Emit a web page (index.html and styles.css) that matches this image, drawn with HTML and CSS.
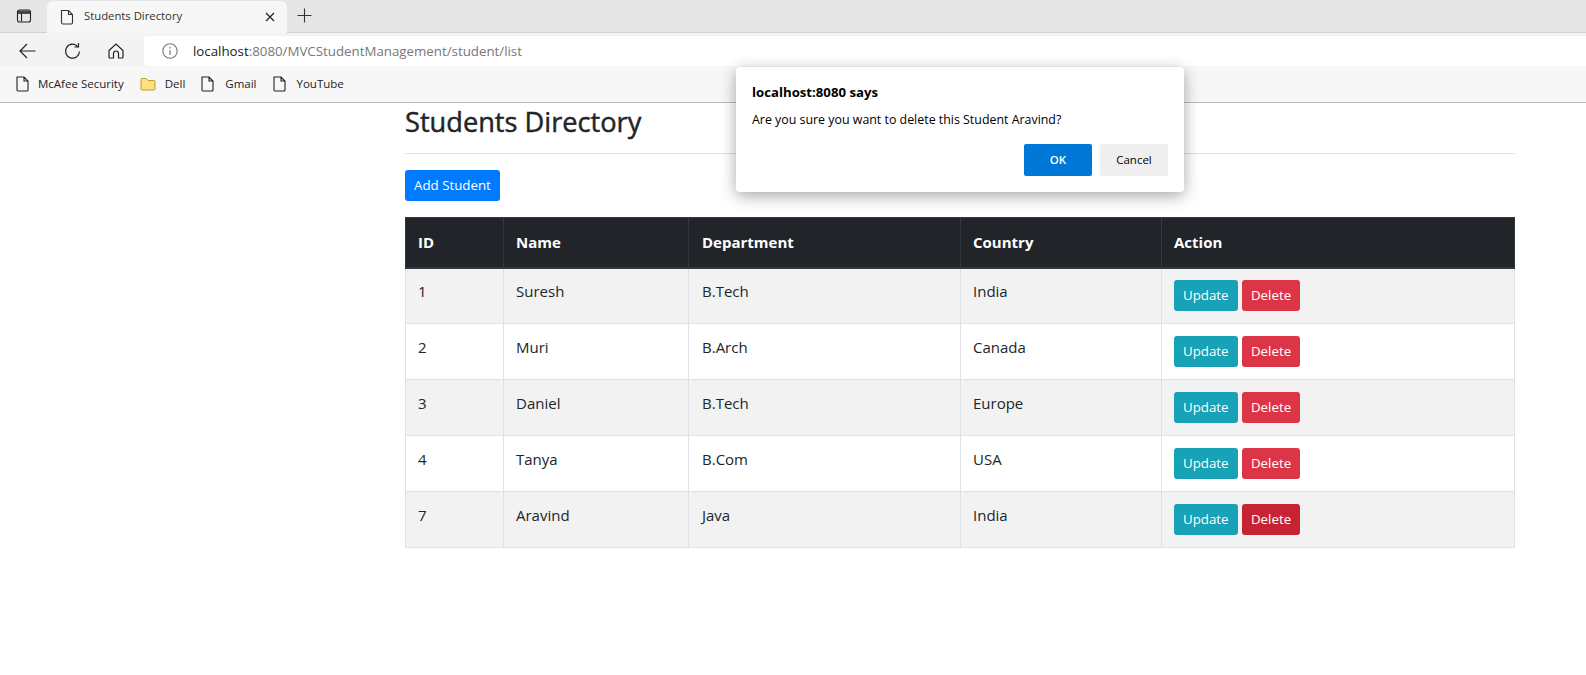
FILE: index.html
```html
<!DOCTYPE html>
<html lang="en">
<head>
  <meta charset="UTF-8">
  <title>Students Directory</title>
  <link rel="stylesheet" href="styles.css">
</head>
<body>

  <div class="tabstrip">
    <svg class="sidebar-icon" width="16" height="16" viewBox="0 0 16 16"><rect x="1.5" y="2" width="13" height="12" rx="2" fill="none" stroke="#222" stroke-width="1.1"/><path d="M2 5.2h12M5.5 5.2V13.5" fill="none" stroke="#222" stroke-width="1.1"/><rect x="2" y="2.5" width="12" height="2.7" fill="#444"/></svg>
    <div class="tab">
      <svg width="14" height="16" viewBox="0 0 14 16"><path d="M1.5 1.5h7l4 4v8a1.5 1.5 0 0 1-1.5 1.5H3a1.5 1.5 0 0 1-1.5-1.5zM8.5 1.5v4h4" fill="none" stroke="#333" stroke-width="1.1"/></svg>
      <span class="tab-title">Students Directory</span>
      <svg class="tab-close" width="10" height="10" viewBox="0 0 10 10"><path d="M1 1l8 8M9 1l-8 8" stroke="#222" stroke-width="1.2"/></svg>
    </div>
    <svg class="new-tab" width="15" height="15" viewBox="0 0 15 15"><path d="M7.5 0.5v14M0.5 7.5h14" stroke="#333" stroke-width="1.1"/></svg>
  </div>

  <div class="toolbar">
    <svg class="nav-back" width="17" height="16" viewBox="0 0 17 16"><path d="M16.5 8H1M8 1L1 8l7 7" fill="none" stroke="#222" stroke-width="1.2"/></svg>
    <svg class="nav-reload" width="17" height="18" viewBox="0 0 17 18"><path d="M13.8 4.6A7 7 0 1 0 15.5 9.5M14.5 1v4h-4" fill="none" stroke="#222" stroke-width="1.2"/></svg>
    <svg class="nav-home" width="16" height="16" viewBox="0 0 16 16"><path d="M1 7.5L8 1l7 6.5V14a1 1 0 0 1-1 1h-3.5v-4.5a2.5 2.5 0 0 0-5 0V15H2a1 1 0 0 1-1-1z" fill="none" stroke="#222" stroke-width="1.2"/></svg>
    <div class="addressbar">
      <svg width="16" height="16" viewBox="0 0 16 16"><circle cx="8" cy="8" r="7.2" fill="none" stroke="#777" stroke-width="1.1"/><path d="M8 7v5M8 4v1.4" stroke="#777" stroke-width="1.2"/></svg>
      <span class="url"><span class="url-host">localhost</span>:8080/MVCStudentManagement/student/list</span>
    </div>
  </div>

  <div class="bookmarks">
    <div class="bookmark">
      <svg width="13" height="16" viewBox="0 0 13 16"><path d="M1 1h7l4 4v9a1 1 0 0 1-1 1H2a1 1 0 0 1-1-1zM8 1v4h4" fill="none" stroke="#222" stroke-width="1.1"/></svg>
      McAfee Security
    </div>
    <div class="bookmark">
      <svg width="16" height="14" viewBox="0 0 16 14"><path d="M1 2.5a1 1 0 0 1 1-1h4l2 2h6a1 1 0 0 1 1 1V12a1 1 0 0 1-1 1H2a1 1 0 0 1-1-1z" fill="#ffdf80" stroke="#c49a2c" stroke-width="1"/></svg>
      Dell
    </div>
    <div class="bookmark">
      <svg width="13" height="16" viewBox="0 0 13 16"><path d="M1 1h7l4 4v9a1 1 0 0 1-1 1H2a1 1 0 0 1-1-1zM8 1v4h4" fill="none" stroke="#222" stroke-width="1.1"/></svg>
      Gmail
    </div>
    <div class="bookmark">
      <svg width="13" height="16" viewBox="0 0 13 16"><path d="M1 1h7l4 4v9a1 1 0 0 1-1 1H2a1 1 0 0 1-1-1zM8 1v4h4" fill="none" stroke="#222" stroke-width="1.1"/></svg>
      YouTube
    </div>
  </div>

  <div class="container">
    <h2 class="page-title">Students Directory</h2>
    <hr class="divider">
    <a class="btn btn-primary">Add Student</a>

    <table class="students">
      <thead>
        <tr>
          <th class="col-id">ID</th>
          <th class="col-name">Name</th>
          <th class="col-dept">Department</th>
          <th class="col-country">Country</th>
          <th>Action</th>
        </tr>
      </thead>
      <tbody>
        <tr>
          <td>1</td><td>Suresh</td><td>B.Tech</td><td>India</td>
          <td><a class="btn btn-info">Update</a> <a class="btn btn-danger">Delete</a></td>
        </tr>
        <tr>
          <td>2</td><td>Muri</td><td>B.Arch</td><td>Canada</td>
          <td><a class="btn btn-info">Update</a> <a class="btn btn-danger">Delete</a></td>
        </tr>
        <tr>
          <td>3</td><td>Daniel</td><td>B.Tech</td><td>Europe</td>
          <td><a class="btn btn-info">Update</a> <a class="btn btn-danger">Delete</a></td>
        </tr>
        <tr>
          <td>4</td><td>Tanya</td><td>B.Com</td><td>USA</td>
          <td><a class="btn btn-info">Update</a> <a class="btn btn-danger">Delete</a></td>
        </tr>
        <tr>
          <td>7</td><td>Aravind</td><td>Java</td><td>India</td>
          <td><a class="btn btn-info">Update</a> <a class="btn btn-danger btn-hover">Delete</a></td>
        </tr>
      </tbody>
    </table>
  </div>

  <div class="dialog">
    <div class="dialog-title">localhost:8080 says</div>
    <div class="dialog-text">Are you sure you want to delete this Student Aravind?</div>
    <div class="dialog-buttons">
      <button class="dialog-ok">OK</button>
      <button class="dialog-cancel">Cancel</button>
    </div>
  </div>

</body>
</html>
```

FILE: styles.css
```css
* {
  box-sizing: border-box;
}

html, body {
  height: 675px;
  overflow: hidden;
}

body {
  margin: 0;
  font-family: "Open Sans", "Noto Sans", sans-serif;
  background: #fff;
  color: #212529;
}

/* browser chrome */
.tabstrip {
  display: flex;
  align-items: flex-end;
  height: 33px;
  background: #e6e6e6;
  border-bottom: 1px solid #d2d2d2;
}

.sidebar-icon {
  margin: 0 0 8px 16px;
}

.tab {
  display: flex;
  align-items: center;
  width: 240px;
  height: 32px;
  margin-left: 15px;
  margin-bottom: -1px;
  padding: 0 12px 0 13px;
  background: #f7f7f7;
  border-radius: 6px 6px 0 0;
}

.tab-title {
  flex: 1;
  margin-left: 10px;
  margin-bottom: 3px;
  font-size: 11.3px;
  color: #333;
}

.tab-close {
  margin-bottom: 1px;
}

.new-tab {
  margin: 0 0 9px 10px;
}

.toolbar {
  display: flex;
  align-items: center;
  height: 33px;
  padding-top: 3px;
  background: #f3f3f3;
}

.nav-back {
  margin-left: 19px;
}

.nav-reload {
  margin-left: 28px;
}

.nav-home {
  margin-left: 27px;
}

.addressbar {
  flex: 1;
  display: flex;
  align-items: center;
  height: 30px;
  margin-left: 20px;
  padding-left: 18px;
  background: #fff;
  border-radius: 4px 0 0 4px;
}

.url {
  margin-left: 15px;
  font-size: 13.3px;
  color: #777;
}

.url-host {
  color: #222;
}

.bookmarks {
  display: flex;
  align-items: center;
  gap: 16px;
  height: 37px;
  padding-left: 16px;
  padding-bottom: 1px;
  background: #f7f7f7;
  border-bottom: 1px solid #bbb;
}

.bookmark {
  display: flex;
  align-items: center;
  gap: 9px;
  font-size: 11.5px;
  color: #222;
}

.bookmark:nth-child(3) {
  gap: 11px;
}

.bookmark:nth-child(4) {
  gap: 11px;
}

/* page */
.container {
  width: 1110px;
  margin-left: 405px;
}

.page-title {
  margin: 0;
  height: 50px;
  padding-top: 1px;
  font-size: 27.2px;
  line-height: 36px;
  font-weight: 400;
  -webkit-text-stroke: 0.45px #212529;
}

.divider {
  margin: 0 0 16px;
  border: 0;
  border-top: 1px solid #e2e2e2;
}

.btn {
  display: inline-block;
  height: 31px;
  padding: 0 9px;
  font-size: 13.3px;
  line-height: 31px;
  color: #fff;
  border-radius: 3px;
}

.btn-primary {
  background: #007bff;
}

.btn-info {
  background: #17a2b8;
}

.btn-danger {
  margin-left: 1px;
  padding: 0 8.5px;
  background: #dc3545;
}

.btn-hover {
  background: #c82333;
}

.students {
  width: 1110px;
  margin-top: 16px;
  border-collapse: collapse;
  table-layout: fixed;
  font-size: 15px;
}

.students th, .students td {
  padding: 0 12px;
  text-align: left;
  border: 1px solid #dee2e6;
}

.students th {
  height: 50px;
  color: #fff;
  background: #212529;
  border-color: #32383e;
  border-bottom-width: 2px;
}

.students td {
  height: 56px;
  padding-top: 12px;
  line-height: 23px;
  vertical-align: top;
}

.students tbody tr:first-child td {
  padding-top: 11px;
}

.students th:nth-child(3), .students td:nth-child(3) {
  padding-left: 13px;
}

.students tbody tr:nth-child(odd) {
  background: #f2f2f2;
}

.col-id {
  width: 98px;
}

.col-name {
  width: 185px;
}

.col-dept {
  width: 272px;
}

.col-country {
  width: 201px;
}

/* alert box */
.dialog {
  position: absolute;
  left: 736px;
  top: 67px;
  width: 448px;
  height: 125px;
  padding: 17px 16px 16px;
  background: #fff;
  border-radius: 4px;
  box-shadow: 0 4px 16px rgba(0, 0, 0, 0.35);
  color: #000;
}

.dialog-title {
  font-size: 13.2px;
  font-weight: 700;
  line-height: 16px;
}

.dialog-text {
  margin-top: 12px;
  font-size: 12.4px;
  line-height: 16px;
}

.dialog-buttons {
  display: flex;
  justify-content: flex-end;
  gap: 8px;
  margin-top: 16px;
}

.dialog-buttons button {
  width: 68px;
  height: 32px;
  padding-bottom: 2px;
  border: 0;
  border-radius: 2px;
  font-family: inherit;
  font-size: 11.5px;
}

.dialog-ok {
  background: #0078d7;
  color: #fff;
  font-weight: 600;
}

.dialog-cancel {
  background: #efefef;
  color: #000;
}
```
